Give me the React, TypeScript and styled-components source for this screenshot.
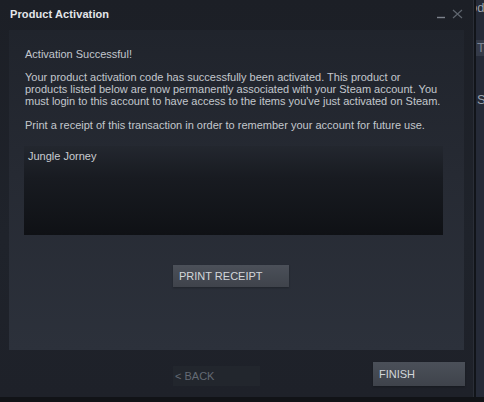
import React from "react";
import styled, { createGlobalStyle } from "styled-components";

const Global = createGlobalStyle`
  html, body { margin: 0; padding: 0; background: #15181d; }
  body { font-family: Arial, "Liberation Sans", sans-serif; }
`;

const Screen = styled.div`
  display: grid;
  grid-template-columns: 474px 10px;
  grid-template-rows: 397px 5px;
  width: 484px;
  height: 402px;
  overflow: hidden;
  background: #14171c;
`;

const Window = styled.div`
  display: flex;
  flex-direction: column;
  background: linear-gradient(180deg, #1c1f26 0%, #1f232b 60%, #1e2129 100%);
  border-right: 1px solid #2a2e37;
  box-sizing: border-box;
`;

const TitleBar = styled.div`
  height: 28px;
  display: flex;
  align-items: center;
  padding: 0 10px;
  flex-shrink: 0;
`;

const Title = styled.div`
  flex: 1;
  color: #e4e6ea;
  font-size: 11px;
  font-weight: bold;
  letter-spacing: 0.1px;
`;

const Controls = styled.div`
  display: flex;
  align-items: center;
  gap: 6px;
`;

const Panel = styled.div`
  margin: 2px 9px 0 9px;
  height: 320px;
  background: linear-gradient(180deg, #20242c 0%, #262a33 45%, #2c313b 100%);
  padding: 18px 21px 0 15px;
  box-sizing: border-box;
  display: flex;
  flex-direction: column;
`;

const Text = styled.p<{ $gap?: number }>`
  margin: 0 0 ${(p) => p.$gap ?? 0}px 1px;
  color: #c3c7cd;
  font-size: 11px;
  line-height: 12px;
`;

const ListBox = styled.div`
  margin-top: 15px;
  height: 89px;
  background: linear-gradient(180deg, #23272f 0%, #181b21 35%, #0f1115 100%);
  padding: 4px 4px;
  box-sizing: border-box;
  color: #c9ccd1;
  font-size: 11px;
  line-height: 12px;
`;

const ButtonRow = styled.div`
  display: flex;
  padding-left: 149px;
  margin-top: 30px;
`;

const Button = styled.div<{ $w: number; $h: number; $disabled?: boolean }>`
  width: ${(p) => p.$w}px;
  height: ${(p) => p.$h}px;
  box-sizing: border-box;
  display: flex;
  align-items: center;
  padding-left: ${(p) => (p.$disabled ? 2 : 6)}px;
  font-size: 11px;
  color: ${(p) => (p.$disabled ? "#646a74" : "#d3d6da")};
  background: ${(p) =>
    p.$disabled
      ? "#22262d"
      : "linear-gradient(180deg, #4b5059 0%, #3f434b 100%)"};
  box-shadow: ${(p) => (p.$disabled ? "none" : "0 1px 2px rgba(0,0,0,0.25)")};
`;

const Footer = styled.div`
  flex: 1;
  display: flex;
  align-items: flex-end;
  padding: 0 8px 11px 173px;
`;

const BackSlot = styled.div`
  flex: 1;
`;

const Side = styled.div`
  background: #252a37;
  border-left: 2px solid #111419;
  box-sizing: border-box;
  display: flex;
  flex-direction: column;
  overflow: hidden;
  font-size: 13px;
  color: #c8ccd4;
  white-space: nowrap;
`;

const SideLine = styled.div<{ $top: number; $band?: boolean; $shift?: number }>`
  margin-top: ${(p) => p.$top}px;
  height: 16px;
  line-height: 16px;
  padding-left: 1px;
  text-indent: ${(p) => p.$shift ?? 0}px;
  background: ${(p) => (p.$band ? "#343a48" : "transparent")};
  color: ${(p) => (p.$band ? "#7d8593" : "#9aa1ad")};
`;

const Bottom = styled.div`
  grid-column: 1 / span 2;
  background: #111317;
`;

export default function App() {
  return (
    <>
      <Global />
      <Screen>
        <Window>
          <TitleBar>
            <Title>Product Activation</Title>
            <Controls>
              <svg width="10" height="10" viewBox="0 0 10 10">
                <line x1="1" y1="8.5" x2="9" y2="8.5" stroke="#7c828c" strokeWidth="1.4" />
              </svg>
              <svg width="11" height="10" viewBox="0 0 11 10">
                <path d="M1 1 L10 9 M10 1 L1 9" stroke="#5f656e" strokeWidth="1.2" fill="none" />
              </svg>
            </Controls>
          </TitleBar>
          <Panel>
            <Text $gap={11}>Activation Successful!</Text>
            <Text $gap={12}>
              Your product activation code has successfully been activated. This product or
              products listed below are now permanently associated with your Steam account. You
              must login to this account to have access to the items you've just activated on Steam.
            </Text>
            <Text>Print a receipt of this transaction in order to remember your account for future use.</Text>
            <ListBox>Jungle Jorney</ListBox>
            <ButtonRow>
              <Button $w={116} $h={22}>PRINT RECEIPT</Button>
            </ButtonRow>
          </Panel>
          <Footer>
            <BackSlot>
              <Button $w={87} $h={20} $disabled>
                &lt; BACK
              </Button>
            </BackSlot>
            <Button $w={92} $h={24}>FINISH</Button>
          </Footer>
        </Window>
        <Side>
          <SideLine $top={0} $shift={-7}>od</SideLine>
          <SideLine $top={24} $band>Tr</SideLine>
          <SideLine $top={36}>SI</SideLine>
        </Side>
        <Bottom />
      </Screen>
    </>
  );
}
